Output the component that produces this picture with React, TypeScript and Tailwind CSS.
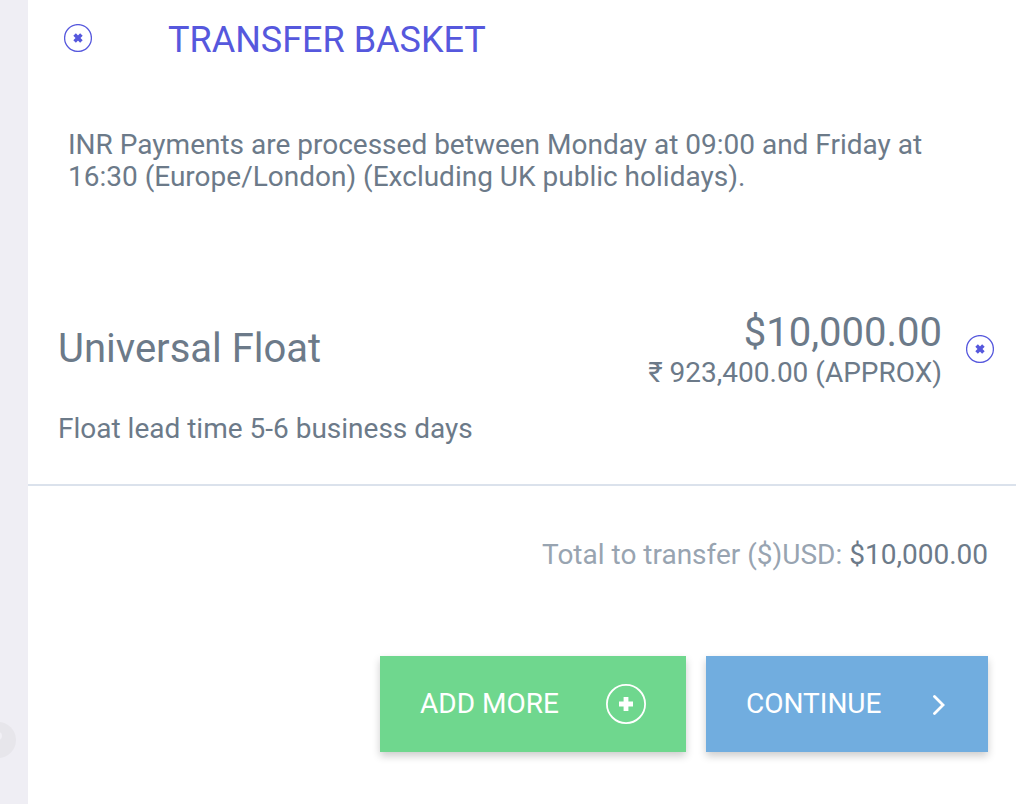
import React from 'react';

interface BasketItem {
  name: string;
  amount: string;
  approx: string;
  leadTime: string;
}

const items: BasketItem[] = [
  {
    name: 'Universal Float',
    amount: '$10,000.00',
    approx: '₹ 923,400.00 (APPROX)',
    leadTime: 'Float lead time 5-6 business days',
  },
];

const CloseButton: React.FC<{ label: string }> = ({ label }) => (
  <button
    type="button"
    aria-label={label}
    className="flex h-7 w-7 shrink-0 items-center justify-center rounded-full text-[#5658dd] hover:bg-[#5658dd]/10"
  >
    <svg viewBox="0 0 28 28" className="h-7 w-7" fill="none" stroke="currentColor">
      <circle cx="14" cy="14" r="13.4" strokeWidth="1.3" />
      <path d="M10.6 10.6L17.4 17.4M17.4 10.6L10.6 17.4" strokeWidth="3.6" />
    </svg>
  </button>
);

const PlusIcon: React.FC = () => (
  <svg viewBox="0 0 40 40" className="h-10 w-10 shrink-0" fill="none" stroke="currentColor">
    <circle cx="20" cy="20" r="19.1" strokeWidth="1.8" />
    <path d="M20 13v14M13 20h14" strokeWidth="4.8" />
  </svg>
);

const ChevronIcon: React.FC = () => (
  <svg viewBox="0 0 14 22" className="h-[22px] w-[14px] shrink-0" fill="none" stroke="currentColor">
    <path d="M2.5 3.5L11 12L2.5 20.5" strokeWidth="2.8" strokeLinecap="round" />
  </svg>
);

const App: React.FC = () => {
  return (
    <div className="flex min-h-screen bg-white font-['Roboto','Noto_Sans',sans-serif] text-[28px] leading-8 text-[#6c7a89]">
      {/* Page behind the panel */}
      <aside className="flex w-7 shrink-0 items-end justify-end overflow-hidden bg-[#efeef4] pr-3 pb-[46px]">
        <div className="flex h-9 w-9 shrink-0 items-center justify-center rounded-full bg-[#e7e6eb]">
          <div className="mb-2 h-2 w-2 rounded-full bg-[#f1f0f5]"></div>
        </div>
      </aside>

      <main className="min-w-0 flex-1">
        <header className="flex items-start px-9 pt-6">
          <CloseButton label="Close basket" />
          <h1 className="ml-[76px] text-4xl leading-8 text-[#5658dd]">TRANSFER BASKET</h1>
        </header>

        <p className="px-10 pt-[73px]">
          INR Payments are processed between Monday at 09:00 and Friday at 16:30 (Europe/London) (Excluding UK public holidays).
        </p>

        <ul className="mt-[116px]">
          {items.map((item) => (
            <li key={item.name} className="border-b-2 border-[#dbe2ec] pr-[22px] pb-[39px] pl-[30px]">
              <div className="flex items-center gap-6">
                <h2 className="flex-1 text-[40px] leading-[48px]">{item.name}</h2>
                <div className="text-right">
                  <div className="text-[40px] leading-[48px]">{item.amount}</div>
                  <div>{item.approx}</div>
                </div>
                <CloseButton label={`Remove ${item.name}`} />
              </div>
              <p className="mt-6">{item.leadTime}</p>
            </li>
          ))}
        </ul>

        <div className="px-7 pt-[53px] text-right text-[#98a4b1]">
          Total to transfer ($)USD: <span className="text-[#6c7a89]">$10,000.00</span>
        </div>

        <div className="flex justify-end gap-5 px-7 pt-[85px] pb-[52px] text-white">
          <button
            type="button"
            className="flex h-24 w-[306px] items-center justify-between bg-[#6fd78e] px-10 shadow-[0_4px_8px_rgba(0,0,0,0.2)] hover:bg-[#5fcb80]"
          >
            ADD MORE
            <PlusIcon />
          </button>
          <button
            type="button"
            className="flex h-24 w-[282px] items-center justify-between bg-[#71addf] pr-[42px] pl-10 shadow-[0_4px_8px_rgba(0,0,0,0.2)] hover:bg-[#5f9fd4]"
          >
            CONTINUE
            <ChevronIcon />
          </button>
        </div>
      </main>
    </div>
  );
};

export default App;
